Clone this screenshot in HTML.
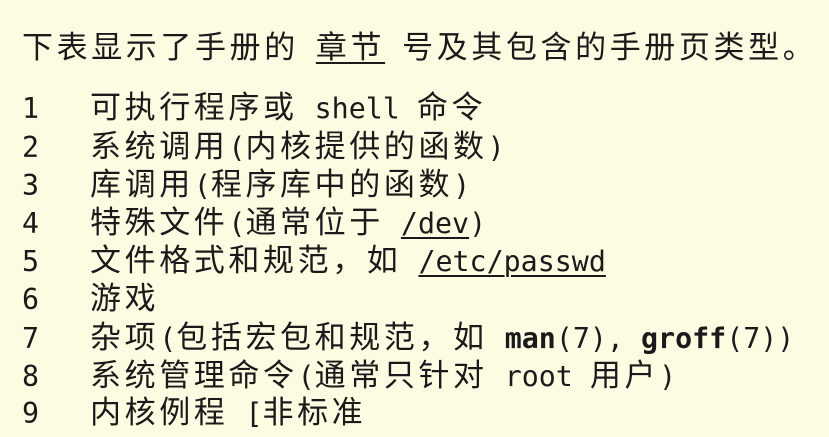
<!DOCTYPE html>
<html><head><meta charset="utf-8"><style>
html,body{margin:0;padding:0;}
body{width:829px;height:437px;background:#fdfce3;position:relative;overflow:hidden;color:#1a1a1a;
font-family:"DejaVu Sans Mono","Liberation Mono",monospace;font-size:28.3px;}
.l{position:absolute;left:22px;line-height:38px;white-space:pre;}
.c{font-family:"Noto Sans CJK SC",sans-serif;font-size:31px;letter-spacing:3.6px;}
.n{display:inline-block;width:68px;}
u{text-decoration:underline;text-decoration-thickness:2px;text-underline-offset:4px;}
b{font-weight:bold;}
</style></head><body>
<div class="l" style="top:26px"><span class="c">下表显示了手册的</span> <u class="c">章节</u> <span class="c">号及其包含的手册页类型。</span></div>
<div class="l" style="top:86px"><span class="n">1</span><span class="c">可执行程序或</span> shell <span class="c">命令</span></div>
<div class="l" style="top:125px"><span class="n">2</span><span class="c">系统调用</span>(<span class="c">内核提供的函数</span>)</div>
<div class="l" style="top:163px"><span class="n">3</span><span class="c">库调用</span>(<span class="c">程序库中的函数</span>)</div>
<div class="l" style="top:201px"><span class="n">4</span><span class="c">特殊文件</span>(<span class="c">通常位于</span> <u>/dev</u>)</div>
<div class="l" style="top:239px"><span class="n">5</span><span class="c">文件格式和规范，如</span> <u>/etc/passwd</u></div>
<div class="l" style="top:277px"><span class="n">6</span><span class="c">游戏</span></div>
<div class="l" style="top:316px"><span class="n">7</span><span class="c">杂项</span>(<span class="c">包括宏包和规范，如</span> <b>man</b>(7), <b>groff</b>(7))</div>
<div class="l" style="top:354px"><span class="n">8</span><span class="c">系统管理命令</span>(<span class="c">通常只针对</span> root <span class="c">用户</span>)</div>
<div class="l" style="top:391px"><span class="n">9</span><span class="c">内核例程</span> [<span class="c">非标准</span></div>
</body></html>
